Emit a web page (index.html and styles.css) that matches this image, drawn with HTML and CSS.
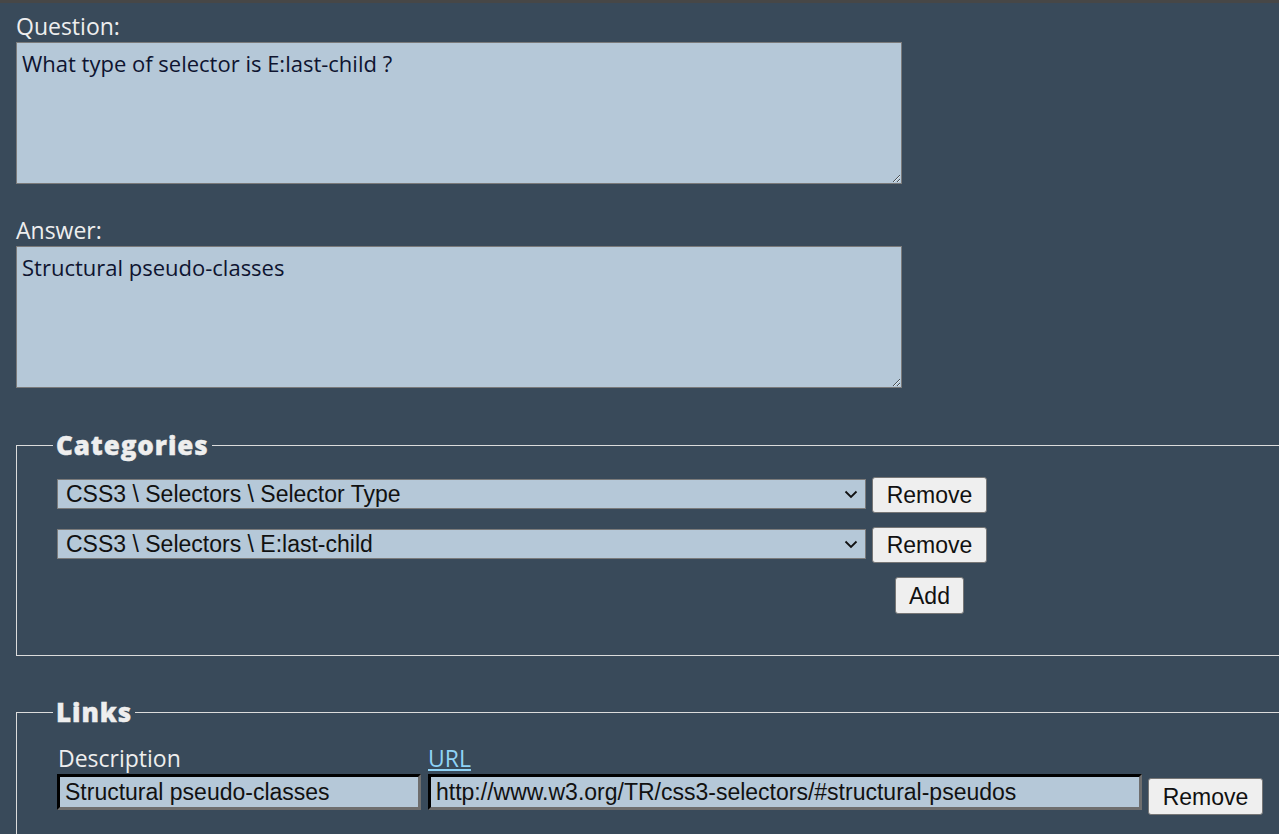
FILE: index.html
```html
<!DOCTYPE html>
<html lang="en">
<head>
<meta charset="utf-8">
<title>Edit card</title>
<link rel="stylesheet" href="styles.css">
</head>
<body>
<div class="page">
  <form class="card-form">
    <label class="field-label" for="q">Question:</label>
    <textarea id="q" class="big-text">What type of selector is E:last-child ?</textarea>

    <label class="field-label answer-label" for="a">Answer:</label>
    <textarea id="a" class="big-text">Structural pseudo-classes</textarea>

    <fieldset class="group categories">
      <legend class="group-title">Categories</legend>
      <div class="cat-grid">
        <div class="select-wrap">
          <select class="cat-select"><option>CSS3 \ Selectors \ Selector Type</option></select>
          <svg class="chev" width="14" height="10" viewBox="0 0 14 10"><path d="M1.5 2.5 L7 8 L12.5 2.5" fill="none" stroke="#111" stroke-width="1.8"/></svg>
        </div>
        <button type="button" class="btn">Remove</button>
        <div class="select-wrap">
          <select class="cat-select"><option>CSS3 \ Selectors \ E:last-child</option></select>
          <svg class="chev" width="14" height="10" viewBox="0 0 14 10"><path d="M1.5 2.5 L7 8 L12.5 2.5" fill="none" stroke="#111" stroke-width="1.8"/></svg>
        </div>
        <button type="button" class="btn">Remove</button>
        <span></span>
        <button type="button" class="btn btn-add">Add</button>
      </div>
    </fieldset>

    <fieldset class="group links">
      <legend class="group-title">Links</legend>
      <div class="link-grid">
        <span class="col-label desc-label">Description</span>
        <a class="col-label url-label" href="#">URL</a>
        <span></span>
        <input class="link-input" type="text" value="Structural pseudo-classes">
        <input class="link-input" type="text" value="http://www.w3.org/TR/css3-selectors/#structural-pseudos">
        <button type="button" class="btn btn-link-remove">Remove</button>
      </div>
    </fieldset>
  </form>
</div>
</body>
</html>
```

FILE: styles.css
```css
html, body {
  margin: 0;
  padding: 0;
  background: #394a5a;
  overflow: hidden;
}

.page {
  border-top: 3px solid #474747;
  padding: 8px 0 0 16px;
  font-family: "Open Sans", "Noto Sans", sans-serif;
  color: #eeeeee;
}

.card-form {
  display: flex;
  flex-direction: column;
  align-items: flex-start;
}

.field-label {
  display: block;
  font-size: 23px;
  line-height: 30px;
  height: 31px;
  color: #eeeeee;
}

.answer-label {
  margin-top: 31px;
}

.big-text {
  box-sizing: border-box;
  width: 886px;
  height: 142px;
  margin: 0;
  padding: 5px 5px;
  border: 1px solid #7a7a7a;
  background: #b5c8d8;
  color: #0e1430;
  font-family: "Open Sans", "Noto Sans", sans-serif;
  font-size: 22px;
  line-height: 30px;
}

.group {
  box-sizing: border-box;
  width: 1320px;
  margin: 0;
  border: 1px solid #dcdcdc;
  border-right: none;
  padding: 0 0 0 40px;
}

.categories {
  margin-top: 42px;
  height: 226px;
}

.links {
  margin-top: 41px;
  height: 160px;
}

.group-title {
  margin-left: -4px;
  padding: 0 3px;
  font-family: "Open Sans", "Noto Sans", sans-serif;
  font-weight: 800;
  font-size: 26px;
  line-height: 30px;
  color: #eeeeee;
  letter-spacing: 0.9px;
  -webkit-text-stroke: 0.4px #eeeeee;
}

.cat-grid {
  display: grid;
  grid-template-columns: 809px 115px;
  column-gap: 6px;
  row-gap: 14px;
  align-items: start;
  justify-items: center;
  margin-top: 17px;
  width: 930px;
}

.select-wrap {
  position: relative;
  width: 809px;
  height: 30px;
  margin-top: 2px;
}

.cat-select {
  appearance: none;
  -webkit-appearance: none;
  box-sizing: border-box;
  width: 809px;
  height: 30px;
  margin: 0;
  padding: 0 30px 0 8px;
  border: 1px solid #7a7a7a;
  border-radius: 0;
  background: #b5c8d8;
  color: #111;
  font-family: "Liberation Sans", Arial, sans-serif;
  font-size: 23px;
  line-height: 28px;
}

.chev {
  position: absolute;
  right: 8px;
  top: 10px;
  pointer-events: none;
}

.btn {
  box-sizing: border-box;
  height: 36px;
  margin: 0;
  padding: 0;
  border: 1px solid #767676;
  border-radius: 3px;
  background: #efefef;
  color: #111;
  font-family: "Liberation Sans", Arial, sans-serif;
  font-size: 23px;
  line-height: 34px;
  width: 115px;
}

.btn-add {
  width: 69px;
  height: 37px;
}

.link-grid {
  display: grid;
  grid-template-columns: 364px 714px 115px;
  column-gap: 7px;
  align-items: end;
  margin-top: 16px;
}

.col-label {
  font-size: 23px;
  line-height: 30px;
  color: #eeeeee;
  margin-bottom: 1px;
}

.desc-label {
  padding-left: 1px;
}

.url-label {
  color: #8fd3f7;
  text-decoration: underline;
  justify-self: start;
}

.link-input {
  box-sizing: border-box;
  height: 36px;
  margin: 0;
  padding: 0 5px;
  border: 3px inset #777;
  border-top-color: #1e1e1e;
  border-left-color: #1e1e1e;
  border-bottom-color: #6e6e6e;
  border-right-color: #6e6e6e;
  background: #b5c8d8;
  color: #111;
  font-family: "Liberation Sans", Arial, sans-serif;
  font-size: 23px;
  width: 100%;
}

.btn-link-remove {
  align-self: end;
  height: 37px;
  margin-bottom: -5px;
  margin-left: -1px;
}
```
